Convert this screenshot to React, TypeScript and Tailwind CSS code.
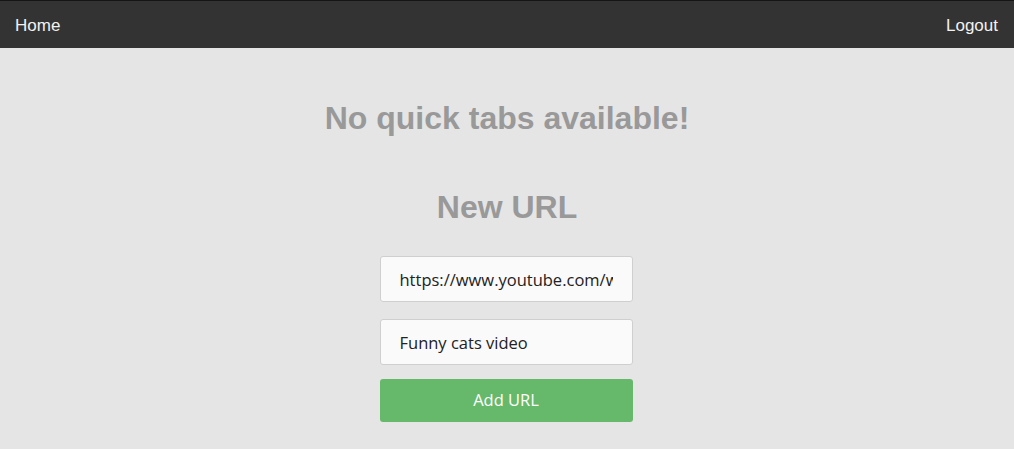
const NavBar = () => (
  <div className="h-12 bg-[#333333] border-t border-[#151515] flex items-center justify-between pl-[15px] pr-[16px] pt-[2px] text-[17px] text-[#f2f2f2] font-['Liberation_Sans',Arial,sans-serif]">
    <a href="#">Home</a>
    <a href="#">Logout</a>
  </div>
);

const NewUrlForm = () => (
  <form className="w-[253px] mr-[2px] flex flex-col font-['Open_Sans',Verdana,sans-serif]" onSubmit={e => e.preventDefault()}>
    <input
      className="h-[46px] rounded-[3px] border border-[#cfcfcf] bg-[#fafafa] px-[19px] text-[16.5px] text-[#222] outline-none"
      defaultValue="https://www.youtube.com/watch?v=cats"
    />
    <input
      className="mt-[17px] h-[46px] rounded-[3px] border border-[#cfcfcf] bg-[#fafafa] px-[19px] text-[16.5px] text-[#222] outline-none"
      defaultValue="Funny cats video"
    />
    <button className="mt-[14px] h-[43px] rounded-[3px] bg-[#66b96a] text-[16.5px] text-white">Add URL</button>
  </form>
);

export default function App() {
  return (
    <div className="min-h-[449px] bg-[#e5e5e5]">
      <NavBar />
      <div className="flex flex-col items-center">
        <h1 className="mt-[52px] text-[32px] leading-[37px] font-bold text-[#999] font-['Liberation_Sans',Arial,sans-serif]">
          No quick tabs available!
        </h1>
        <h2 className="mt-[52px] mb-[30px] text-[32px] leading-[37px] font-bold text-[#999] font-['Liberation_Sans',Arial,sans-serif]">
          New URL
        </h2>
        <NewUrlForm />
      </div>
    </div>
  );
}
